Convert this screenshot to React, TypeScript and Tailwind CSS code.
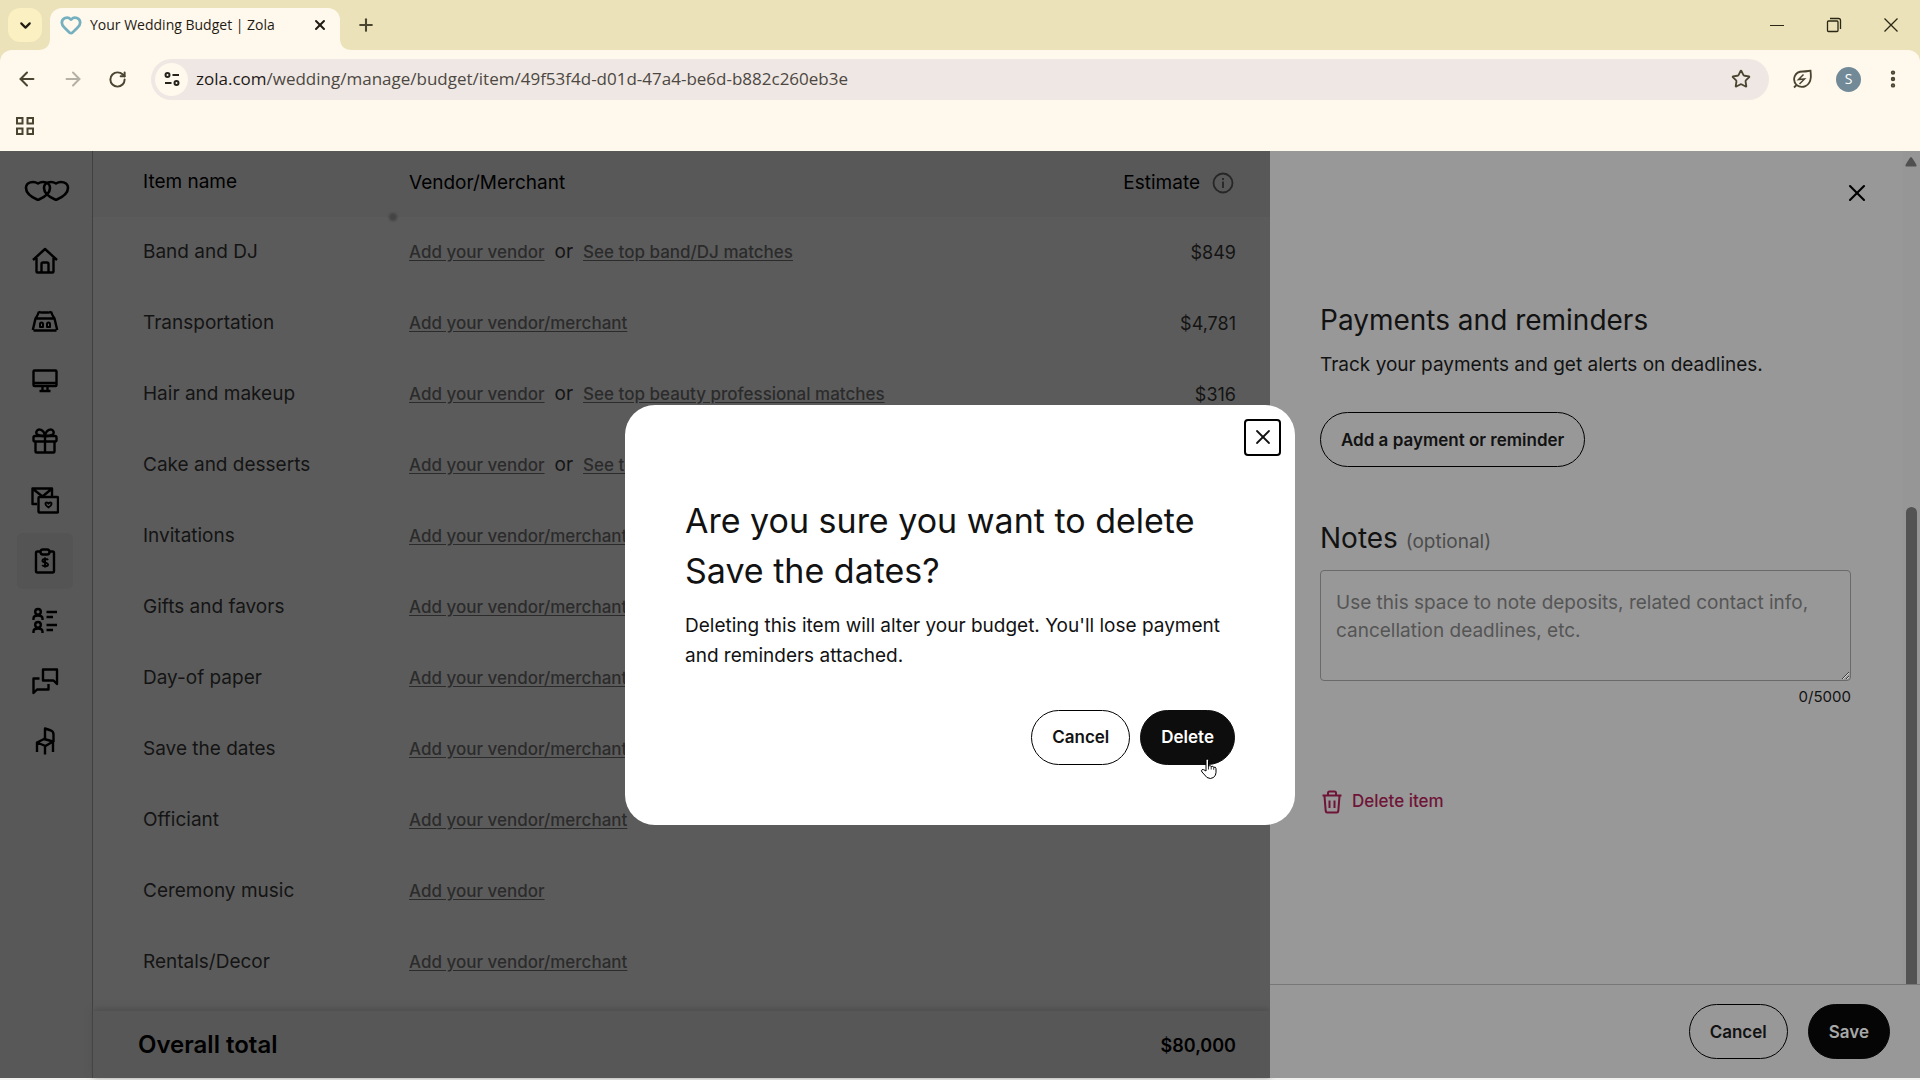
import { useState } from "react";
import type { ReactNode } from "react";
import { ArrowLeft, ArrowRight, ChevronDown, EllipsisVertical, Heart, Plus, RotateCw, Star, X } from "lucide-react";

type BudgetItem = { name: string; link: string; matches?: string; estimate?: string };

const items: BudgetItem[] = [
  { name: "Band and DJ", link: "Add your vendor", matches: "See top band/DJ matches", estimate: "$849" },
  { name: "Transportation", link: "Add your vendor/merchant", estimate: "$4,781" },
  { name: "Hair and makeup", link: "Add your vendor", matches: "See top beauty professional matches", estimate: "$316" },
  { name: "Cake and desserts", link: "Add your vendor", matches: "See top bakery matches" },
  { name: "Invitations", link: "Add your vendor/merchant" },
  { name: "Gifts and favors", link: "Add your vendor/merchant" },
  { name: "Day-of paper", link: "Add your vendor/merchant" },
  { name: "Save the dates", link: "Add your vendor/merchant" },
  { name: "Officiant", link: "Add your vendor/merchant" },
  { name: "Ceremony music", link: "Add your vendor" },
  { name: "Rentals/Decor", link: "Add your vendor/merchant" },
];

const navIcons: { label: string; active?: boolean; icon: ReactNode }[] = [
  {
    label: "Home",
    icon: (
      <>
        <path d="M2 13 14 2l12 11M5.500 11v13.500q0 1 1 1h15q1 0 1-1V11" />
        <path d="M10.500 25v-8q0-1.500 1.500-1.500h4q1.500 0 1.500 1.500v8" />
      </>
    ),
  },
  {
    label: "Venues",
    icon: (
      <>
        <path d="M8 4.500q1.500 1.500 3 1h6q1.500.5 3-1M8 4.500Q7 8 4.500 11.500L1.800 23M20 4.500q1 3.500 3.500 7L26.200 23M5 11.500h18M2.500 23.500h23" />
        <path d="M9 20v-3q0-1.500 1.500-1.500T12 17v3ZM16 20v-3q0-1.500 1.500-1.500T19 17v3Z" strokeWidth="2" />
      </>
    ),
  },
  {
    label: "Website",
    icon: (
      <>
        <rect x="2.500" y="3.500" width="23" height="15.500" rx="1" />
        <path d="M3 16h22M11.500 19.500v4M16.500 19.500v4M8.500 24h11" />
      </>
    ),
  },
  {
    label: "Registry",
    icon: (
      <>
        <rect x="2.500" y="9" width="23" height="5.500" rx="1.500" />
        <path d="M4.500 15v9.500q0 1 1 1h17q1 0 1-1V15M14 9v16M14 9C7 9 4.500 7.500 5.500 4.500 7 1 13 2 14 9ZM14 9c7 0 9.500-1.500 8.500-4.500C21 1 15 2 14 9Z" />
      </>
    ),
  },
  {
    label: "Invitations",
    icon: (
      <>
        <path d="M6 17H1.500V1.500H21V9M2 2l9.500 7.500L20.500 2" />
        <rect x="7.500" y="10" width="19.500" height="15.500" rx="1" />
        <path d="M17.500 20.500c-4-2.500-3.500-5-1.800-5 1 0 1.500.5 1.800 1.200.3-.7.8-1.200 1.800-1.200 1.700 0 2.200 2.500-1.800 5Z" strokeWidth="1.800" />
      </>
    ),
  },
  {
    label: "Budget",
    active: true,
    icon: (
      <>
        <path d="M9 4.500H6.500q-1.500 0-1.500 1.500v18q0 1.500 1.500 1.500h15q1.500 0 1.500-1.500V6q0-1.500-1.500-1.500H19" />
        <rect x="9.500" y="2.500" width="9" height="5" rx="2.500" />
        <path d="M17 13c-1-1.500-5.500-1.500-5.500.8 0 2.400 5.500 1.200 5.500 3.700 0 2.300-4.500 2.300-5.800.5M14 10.500v10" strokeWidth="2" />
      </>
    ),
  },
  {
    label: "Guest list",
    icon: (
      <>
        <circle cx="7" cy="4.800" r="2.800" />
        <path d="M2.500 13v-1.500q0-3 4.500-3t4.500 3V13M2.500 26v-1.500q0-3 4.500-3t4.500 3V26" />
        <circle cx="7" cy="17.800" r="2.800" />
        <path d="M15.500 5H26M15.500 10H22M15.500 18H26M15.500 23H22" />
      </>
    ),
  },
  {
    label: "Messages",
    icon: (
      <>
        <path d="M12 12V2.500h14V17l-3.500-3.500H12Z" />
        <path d="M8.500 11.500H2.500V26L6 22.500h11.500V17" />
      </>
    ),
  },
  {
    label: "Seating",
    icon: (
      <>
        <path d="M14 12V1.500l6 2q2.500 1 2.500 4V15" />
        <path d="m6 15.500 7-3.500 9 2.500-7.500 4.500ZM6 15.500V25M14 19v8.500M22 15v10" />
      </>
    ),
  },
];

const pill = "flex h-[55px] items-center justify-center rounded-full border px-5 pt-0.5 text-[17px] font-semibold";
const vendorLink = "text-[17px] font-medium text-[#2b2b2b] underline underline-offset-2";

function Browser() {
  return (
    <header className="shrink-0 bg-[#ebe2b9] font-['Open_Sans',sans-serif] text-[#4a4531]">
      <div className="flex h-[50px] items-center pl-2">
        <button aria-label="Search tabs" className="mr-2 flex size-[34px] items-center justify-center rounded-xl bg-[#faf0c2] text-[#1f1c10]">
          <ChevronDown className="size-[17px]" strokeWidth={3} />
        </button>
        <div className="relative flex h-[42px] w-[290px] items-center self-end rounded-t-xl bg-[#fff8ed] pb-2 pl-2.5 text-[#1f1c14]">
          <svg aria-hidden="true" viewBox="0 0 12 12" className="absolute bottom-0 -left-3 size-3 fill-[#fff8ed]"><path d="M12 0v12H0Q12 12 12 0Z" /></svg>
          <svg aria-hidden="true" viewBox="0 0 12 12" className="absolute -right-3 bottom-0 size-3 fill-[#fff8ed]"><path d="M0 0v12h12Q0 12 0 0Z" /></svg>
          <Heart className="mr-2 size-[22px] text-[#74b0bf]" strokeWidth={3} />
          <span className="text-sm">Your Wedding Budget | Zola</span>
          <button aria-label="Close tab" className="mr-3 ml-auto"><X className="size-4" strokeWidth={3} /></button>
        </div>
        <button aria-label="New tab" className="ml-4"><Plus className="size-5" strokeWidth={2.5} /></button>
        <div className="mr-[21px] ml-auto flex items-center gap-[41px] text-[#2b2715]">
          <button aria-label="Minimize"><svg viewBox="0 0 16 16" className="size-4" stroke="currentColor"><path d="M1 8.500h14" /></svg></button>
          <button aria-label="Restore"><svg viewBox="0 0 16 16" className="size-4" fill="none" stroke="currentColor" strokeWidth="1.300"><rect x="1.500" y="4" width="10.500" height="10.500" rx="1" /><path d="M4 1.500h8.500q2 0 2 2V12" /></svg></button>
          <button aria-label="Close window"><svg viewBox="0 0 16 16" className="size-4" stroke="currentColor" strokeWidth="1.300"><path d="m1.500 1.500 13 13m0-13-13 13" /></svg></button>
        </div>
      </div>
      <div className="rounded-t-xl bg-[#fff8ed]">
        <div className="flex h-[58px] items-center pr-4 pl-4">
          <button aria-label="Back"><ArrowLeft className="size-[22px]" strokeWidth={2.2} /></button>
          <button aria-label="Forward" className="ml-6 text-[#b5b0a5]"><ArrowRight className="size-[22px]" strokeWidth={2.2} /></button>
          <button aria-label="Reload" className="ml-6"><RotateCw className="size-[19px]" strokeWidth={2.5} /></button>
          <div className="ml-6 flex h-[41px] flex-1 items-center rounded-full bg-[#efe7e3] pl-1">
            <button aria-label="Site information" className="flex size-[33px] items-center justify-center rounded-full bg-[#fff8ed] text-[#26231c]">
              <svg viewBox="0 0 18 18" className="size-[18px]" fill="none" stroke="currentColor" strokeWidth="2"><circle cx="4.500" cy="5" r="2" /><path d="M9.500 5H16M2 13h6.500" /><circle cx="13.500" cy="13" r="2" /></svg>
            </button>
            <p className="ml-2 flex-1 text-[17px] text-[#4c4742]"><span className="text-[#1d1a17]">zola.com</span>/wedding/manage/budget/item/49f53f4d-d01d-47a4-be6d-b882c260eb3e</p>
            <button aria-label="Bookmark this tab" className="mr-[18px]"><Star className="size-5" strokeWidth={2.2} /></button>
          </div>
          <button aria-label="Energy saver" className="ml-[23px]">
            <svg viewBox="0 0 20 20" className="size-5" fill="none" stroke="currentColor" strokeWidth="1.800"><path d="M2 18.500 4.500 16M4.500 16C0 11 2 2.500 11 2.500c3 0 5-.5 7.500-.8.300 3 .5 4.500.3 6.800C18 17.500 10 20 4.500 16Z" /><path d="M11.500 5.500 6.500 10.500l6-.5-5 5" strokeWidth="1.500" /></svg>
          </button>
          <button aria-label="Profile" className="ml-6 flex size-[25px] items-center justify-center rounded-full bg-[#728a98] text-sm text-white">S</button>
          <button aria-label="Browser menu" className="ml-[21px]"><EllipsisVertical className="size-[22px]" strokeWidth={2.8} /></button>
        </div>
        <div className="flex h-[43px] items-center pb-2 pl-4">
          <button aria-label="Apps">
            <svg viewBox="0 0 18 18" className="size-[18px]" fill="none" stroke="currentColor" strokeWidth="2"><path d="M1 1h5.500v5.500H1zM11.500 1H17v5.500h-5.500zM1 11.500h5.500V17H1zM11.500 11.500H17V17h-5.500z" /></svg>
          </button>
        </div>
      </div>
    </header>
  );
}

function Sidebar() {
  return (
    <nav className="flex w-[93px] shrink-0 flex-col items-center border-r border-[#404040] bg-[#585858] pr-0.5 text-black">
      <a href="#zola" aria-label="Zola" className="mt-7 pl-1">
        <svg viewBox="0 0 46 22" className="h-[22px] w-[46px]" fill="none" stroke="currentColor" strokeWidth="2.600" strokeLinejoin="round">
          <path d="M14 21C7 18 2 14 2 9c0-6 7.500-7.500 12-4.500C18.500 1.500 26 3 26 9c0 5-5 9-12 12Z" />
          <path d="M32 21C25 18 20 14 20 9c0-6 7.500-7.500 12-4.500C36.500 1.500 44 3 44 9c0 5-5 9-12 12Z" />
        </svg>
      </a>
      <ul className="mt-8 flex flex-col gap-1">
        {navIcons.map((n) => (
          <li key={n.label}>
            <a href={`#${n.label}`} aria-label={n.label} className={`flex size-14 items-center justify-center rounded-md ${n.active ? "bg-[#545454]" : ""}`}>
              <svg viewBox="0 0 28 28" className="size-7" fill="none" stroke="currentColor" strokeWidth="2.400" strokeLinejoin="round">{n.icon}</svg>
            </a>
          </li>
        ))}
      </ul>
    </nav>
  );
}

function BudgetTable() {
  return (
    <main className="flex min-w-0 flex-1 flex-col bg-[#5b5b5b] text-[#141414]">
      <table className="w-full table-fixed text-left text-[19px] whitespace-nowrap">
        <thead className="bg-[#585858] text-black">
          <tr className="h-[66px]">
            <th className="relative w-[316px] pb-1 pl-[50px] font-normal">
              Item name
              <span aria-hidden="true" className="absolute right-3 -bottom-1 size-2 rounded-full bg-[#444444] blur-[1px]" />
            </th>
            <th className="pb-0.5 font-normal">Vendor/Merchant</th>
            <th className="w-[180px] pr-9 pb-0.5 font-normal">
              <div className="flex items-center justify-end gap-3">
                Estimate
                <svg viewBox="0 0 22 22" className="size-[22px]" fill="none" stroke="#262626" strokeWidth="1.800"><circle cx="11" cy="11" r="9.500" /><path d="M11 9.500V16M11 6v2" /></svg>
              </div>
            </th>
          </tr>
        </thead>
        <tbody>
          {items.map((item) => (
            <tr key={item.name} className="h-[71px]">
              <td className="pl-[50px]">{item.name}</td>
              <td>
                <a href="#vendor" className={vendorLink}>{item.link}</a>
                {item.matches && (
                  <>
                    <span className="mx-2.5">or</span>
                    <a href="#matches" className={vendorLink}>{item.matches}</a>
                  </>
                )}
              </td>
              <td className="pr-[34px] text-right text-lg">{item.estimate}</td>
            </tr>
          ))}
        </tbody>
      </table>
      <div className="mt-auto flex h-[67px] items-center justify-between bg-[#575757] pr-[34px] pl-[45px] text-black shadow-[0_-2px_6px_#4d4d4d]">
        <span className="text-2xl font-semibold">Overall total</span>
        <span className="pt-0.5 text-lg font-semibold">$80,000</span>
      </div>
    </main>
  );
}

function ItemDrawer() {
  const [notes, setNotes] = useState("");

  return (
    <aside className="flex w-[650px] shrink-0 flex-col bg-[#989898] text-[#121212]">
      <div className="flex min-h-0 flex-1">
        <div className="flex-1 pr-[51px] pl-[50px]">
          <div className="-mr-5 flex justify-end pt-7">
            <button aria-label="Close drawer" className="text-black"><X className="size-7" strokeWidth={1.8} /></button>
          </div>
          <h2 className="mt-[93px] text-[28px] leading-10">Payments and reminders</h2>
          <p className="mt-2.5 text-[19px] leading-[30px]">Track your payments and get alerts on deadlines.</p>
          <button className={`mt-8 border-black ${pill}`}>Add a payment or reminder</button>
          <label htmlFor="notes" className="mt-[51px] block text-[28px] leading-10">
            Notes <span className="text-[19px] text-[#4c4c4c]">(optional)</span>
          </label>
          <textarea
            id="notes"
            value={notes}
            maxLength={5000}
            onChange={(e) => setNotes(e.target.value)}
            placeholder="Use this space to note deposits, related contact info, cancellation deadlines, etc."
            className="mt-2 block h-[111px] w-full rounded border border-[#6a6a6a] px-[15px] py-[18px] text-[19px] leading-7 placeholder:text-[#555555]"
          />
          <p className="mt-1 text-right text-[15px] leading-6">{notes.length}/5000</p>
          <button className="mt-20 flex items-center gap-2 text-[17px] font-medium text-[#6f1437]">
            <svg viewBox="0 0 24 24" className="size-6" fill="none" stroke="currentColor" strokeWidth="2" strokeLinejoin="round"><path d="M2.500 5.500h19M4.500 6l1.200 15q.2 1.500 1.500 1.500h9.600q1.300 0 1.500-1.500L19.500 6M8 5.500V3q0-1.500 1.500-1.500h5Q16 1.500 16 3v2.500M9.500 10.500v7.500M14.500 10.500v7.500" /></svg>
            Delete item
          </button>
        </div>
        <div className="flex w-[18px] flex-col items-center justify-between bg-[#969696]">
          <svg viewBox="0 0 12 10" className="mt-1.5 h-2.5 w-3 fill-[#505050]"><path d="M6 0q1 0 5.500 8 .5 1.500-1 1.500h-9Q0 9.500.5 8 5 0 6 0Z" /></svg>
          <div className="h-[477px] w-[11px] rounded-t-full bg-[#535353]" />
        </div>
      </div>
      <div className="flex items-center justify-end gap-5 border-t border-[#777777] pt-[19px] pr-[30px] pb-[19px]">
        <button className={`border-black ${pill}`}>Cancel</button>
        <button className={`border-[#050505] bg-[#050505] text-[#a8a8a8] ${pill}`}>Save</button>
      </div>
    </aside>
  );
}

function DeleteDialog({ onClose }: { onClose: () => void }) {
  return (
    <div className="absolute inset-0 flex items-center justify-center">
      <div role="dialog" aria-modal="true" aria-labelledby="dialog-title" className="relative w-[670px] rounded-[30px] bg-white px-[60px] pt-[91px] pb-[60px] text-[#121212]">
        <button onClick={onClose} aria-label="Close" className="absolute top-3.5 right-3.5 flex size-[37px] items-center justify-center rounded border-2 border-black">
          <X className="size-6" strokeWidth={1.8} />
        </button>
        <h1 id="dialog-title" className="text-[34px] leading-[50px]">Are you sure you want to delete Save the dates?</h1>
        <p className="mt-[15px] text-[19px] leading-[30px]">Deleting this item will alter your budget. You'll lose payment and reminders attached.</p>
        <div className="mt-[39px] flex justify-end gap-2.5">
          <button onClick={onClose} className={`border-black ${pill}`}>Cancel</button>
          <button className={`relative border-[#0d0d0d] bg-[#0d0d0d] text-white ${pill}`}>
            Delete
            {/* hand pointer over the button edge */}
            <svg aria-hidden="true" viewBox="0 0 18 22" className="absolute right-4 -bottom-4 h-[22px] w-[18px]" fill="white" stroke="black" strokeLinejoin="round">
              <path d="M6 13V2.500Q6 1 7.200 1T8.500 2.500V8q2-1 2.700.5 2-.8 2.500.7 2.300-.5 2.300 1.500v4q0 2.500-2.500 4.800-3 2-6.500 0L2 14q-1.200-1.500 0-2.300T6 13Z" />
              <path d="M8.500 8v3.500M11.200 8.500v3M13.700 9.200v2.600" strokeWidth=".8" />
            </svg>
          </button>
        </div>
      </div>
    </div>
  );
}

export default function App() {
  const [open, setOpen] = useState(true);

  return (
    <div className="flex h-screen flex-col overflow-hidden bg-[#f1f1ef] pb-0.5">
      <Browser />
      <div className="relative flex min-h-0 flex-1 font-[Inter,sans-serif]">
        <Sidebar />
        <BudgetTable />
        <ItemDrawer />
        {open && <DeleteDialog onClose={() => setOpen(false)} />}
      </div>
    </div>
  );
}
